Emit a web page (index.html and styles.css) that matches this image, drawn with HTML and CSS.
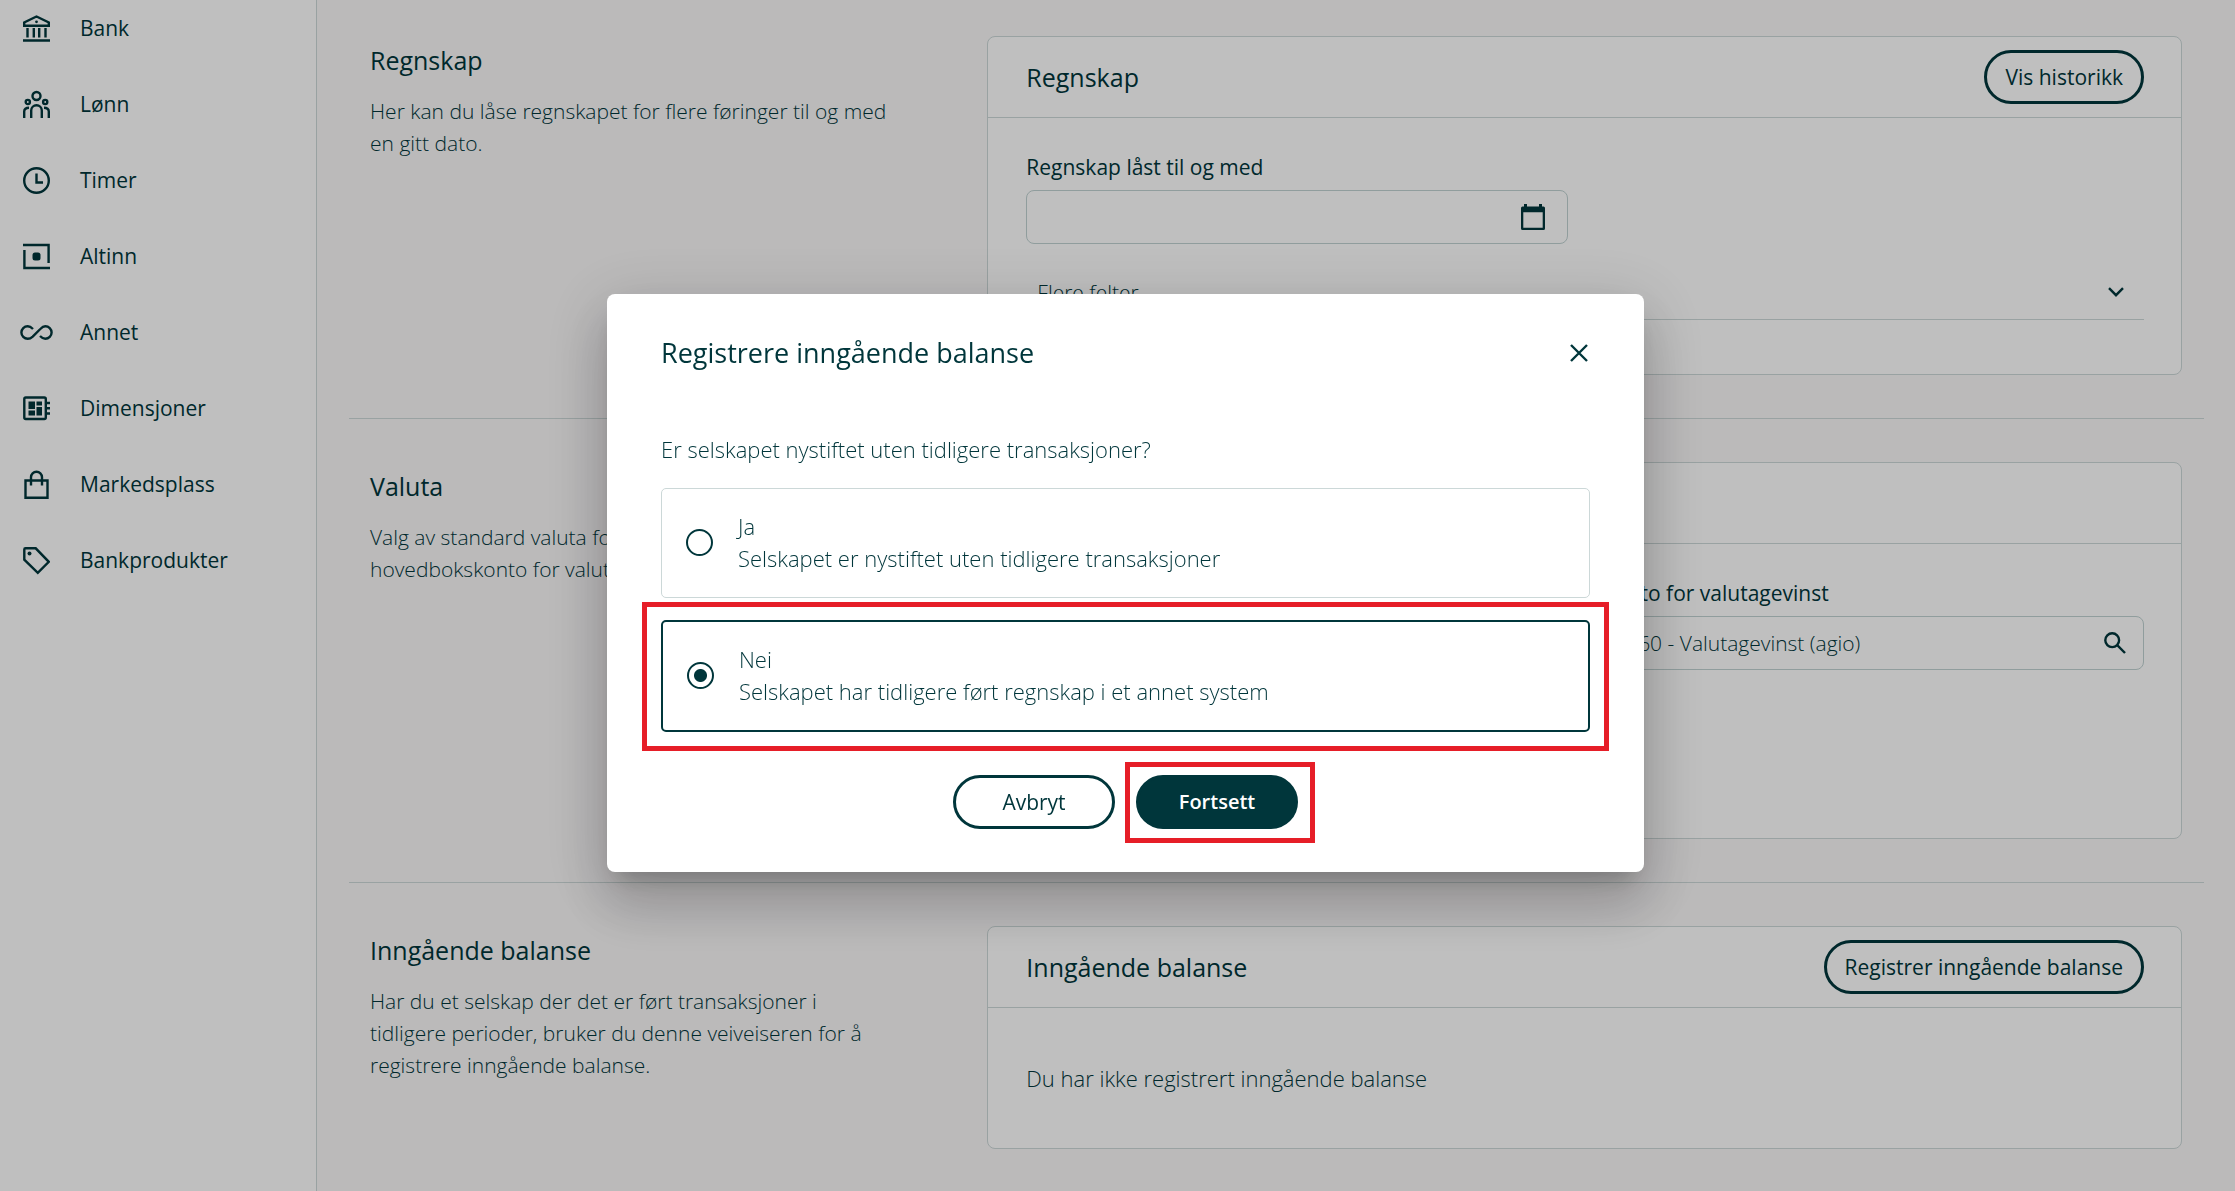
FILE: index.html
```
<!DOCTYPE html>
<html lang="no">
<head>
<meta charset="utf-8">
<title>Innstillinger</title>
<link rel="stylesheet" href="styles.css">
</head>
<body>
<div class="app">
	<nav class="sidebar">
		<a href="#"><svg class="icon" viewBox="0 0 27 27"><path d="M1.2 10.8V7.4L13.5 1.5l12.3 5.9v3.4z"/><circle class="fill" cx="13.5" cy="6.8" r="1.4"/><path d="M4.5 13v9.5M10.8 13v9.5M16.2 13v9.5M22.5 13v9.5M0 25.5h27"/></svg>Bank</a>
		<a href="#"><svg class="icon" viewBox="0 0 27 27"><circle cx="13.5" cy="5" r="4"/><circle cx="4.8" cy="11" r="2.1"/><circle cx="22.2" cy="11" r="2.1"/><path d="M8.2 27v-7.500a5.300 5.300 0 0 1 10.600 0V27M1.200 27v-6.500q0-3.700 4.800-3.700M25.800 27v-6.500q0-3.700-4.800-3.700"/></svg>Lønn</a>
		<a href="#"><svg class="icon" viewBox="0 0 27 27"><circle cx="13.500" cy="13.500" r="12.300"/><path d="M13.500 6.500v9h6.500"/></svg>Timer</a>
		<a href="#"><svg class="icon" viewBox="0 0 27 27"><path d="M0 2h25.600v18M1.400 7v18H27"/><rect class="fill" x="9.500" y="9.500" width="8" height="8" rx="2.500"/></svg>Altinn</a>
		<a href="#"><svg class="icon wide" viewBox="0 0 33 27"><path d="M13 10C11 8 9.500 7.200 7.700 7.200a6.300 6.300 0 0 0 0 12.600c2 0 3.500-.8 5-2.200L20.300 10C22 8.200 23.500 7.200 25.300 7.200a6.300 6.300 0 0 1 0 12.600c-2 0-3.500-.9-5.300-2.800"/></svg>Annet</a>
		<a href="#"><svg class="icon" viewBox="0 0 27 27"><rect x="1.300" y="2.500" width="21.500" height="21.500" rx="1.500"/><path class="fill" d="M5.500 6.500h6.500v7.500H5.500zM13.500 6.500H19v4h-5.500zM13.500 12H19v8.500h-5.500zM5.500 15.500h6.500v5H5.500z"/><path d="M23 8h4M23 13.300h4M23 18.500h4"/></svg>Dimensjoner</a>
		<a href="#"><svg class="icon" viewBox="0 0 27 29"><path d="M2.500 10.500h22v17.300h-22zM8 15.500V7.200a5.500 5.500 0 0 1 11 0v8.300"/></svg>Markedsplass</a>
		<a href="#"><svg class="icon" viewBox="0 0 27 27"><path d="M1.300 2.500v10.200L14.800 25.800 25.800 14.800 12.700 1.300H2.500Q1.300 1.300 1.300 2.500z"/><circle class="fill" cx="6.500" cy="6.500" r="2"/></svg>Bankprodukter</a>
	</nav>

	<main class="content">
		<section class="setting">
			<div class="intro">
				<h2>Regnskap</h2>
				<p>Her kan du låse regnskapet for flere føringer til og med en gitt dato.</p>
			</div>
			<div class="card">
				<div class="card-head"><h3>Regnskap</h3><button type="button" class="btn">Vis historikk</button></div>
				<div class="card-body">
					<div class="fields">
						<div class="field">
							<label for="locked">Regnskap låst til og med</label>
							<div class="input">
								<input id="locked" type="text">
								<svg class="calendar" viewBox="0 0 24 26"><path class="fill" d="M3 0h3v2.500h12V0h3v2.500h1.500Q24 2.500 24 4v20.500q0 1.500-1.500 1.500h-21Q0 26 0 24.500V4q0-1.500 1.500-1.500H3zM2.300 8.300v15.400h19.400V8.300z"/></svg>
							</div>
						</div>
					</div>
					<button type="button" class="expander">Flere felter<svg class="chevron" viewBox="0 0 16 10"><path d="M1 1.200l7 7 7-7"/></svg></button>
				</div>
			</div>
		</section>

		<section class="setting">
			<div class="intro">
				<h2>Valuta</h2>
				<p>Valg av standard valuta for selskapet, samt hovedbokskonto for valutagevinst.</p>
			</div>
			<div class="card">
				<div class="card-head"><h3>Valuta</h3></div>
				<div class="card-body">
					<div class="fields">
						<div class="field">
							<label for="currency">Valuta</label>
							<div class="input"><input id="currency" type="text" value="NOK"></div>
						</div>
						<div class="field">
							<label for="gain">Konto for valutagevinst</label>
							<div class="input">
								<input id="gain" type="text" value="8060 - Valutagevinst (agio)">
								<svg class="search" viewBox="0 0 22 22"><circle cx="8.200" cy="8.200" r="6.900"/><path d="M13.200 13.200l7.800 7.800"/></svg>
							</div>
						</div>
						<div class="field">
							<label for="loss">Konto for valutatap</label>
							<div class="input"><input id="loss" type="text"></div>
						</div>
					</div>
				</div>
			</div>
		</section>

		<section class="setting">
			<div class="intro">
				<h2>Inngående balanse</h2>
				<p>Har du et selskap der det er ført transaksjoner i tidligere perioder, bruker du denne veiveiseren for å registrere inngående balanse.</p>
			</div>
			<div class="card">
				<div class="card-head"><h3>Inngående balanse</h3><button type="button" class="btn">Registrer inngående balanse</button></div>
				<div class="card-body">
					<p class="empty">Du har ikke registrert inngående balanse</p>
				</div>
			</div>
		</section>
	</main>
</div>

<div class="backdrop">
	<form class="modal" role="dialog" aria-labelledby="modal-title">
		<div class="modal-head">
			<h1 id="modal-title">Registrere inngående balanse</h1>
			<button type="button" class="close" aria-label="Lukk"><svg viewBox="0 0 18 18"><path d="M1 1l16 16M17 1L1 17"/></svg></button>
		</div>
		<fieldset>
			<legend>Er selskapet nystiftet uten tidligere transaksjoner?</legend>
			<label class="option">
				<input type="radio" name="new-company">
				<span>Ja<br>Selskapet er nystiftet uten tidligere transaksjoner</span>
			</label>
			<label class="option marked">
				<input type="radio" name="new-company" checked>
				<span>Nei<br>Selskapet har tidligere ført regnskap i et annet system</span>
			</label>
		</fieldset>
		<div class="actions">
			<button type="button" class="btn">Avbryt</button>
			<div class="marked"><button type="button" class="btn primary">Fortsett</button></div>
		</div>
	</form>
</div>
</body>
</html>
```

FILE: styles.css
```
*{box-sizing:border-box;margin:0;padding:0;}
body{background:#faf8f9;color:#00363b;font:300 22px/32px 'Open Sans','Noto Sans',sans-serif;}
button,input{font:inherit;color:inherit;background:none;border:0;}
h1,h2,h3{font-weight:400;font-size:25px;line-height:34px;}
svg{flex:none;fill:none;stroke:#00363b;stroke-width:2.400;}
.fill{fill:#00363b;stroke:none;}

.app{display:flex;height:100vh;overflow:hidden;}

/* sidebar */
.sidebar{flex:none;width:317px;background:#fff;border-right:1px solid #ccd8d8;}
.sidebar a{display:flex;align-items:center;gap:30px;height:76px;padding-left:23px;color:inherit;text-decoration:none;font-size:21px;font-weight:400;}
.sidebar a:first-child{margin-top:-10px;}
.icon{width:27px;height:29px;}
.icon.wide{width:33px;margin:0 -3px;}

/* settings */
.content{flex:1;padding:0 31px 0 32px;}
.setting{display:grid;grid-template-columns:minmax(0,1fr) minmax(0,2fr);gap:20px;padding:43px 22px 43px 21px;border-bottom:1px solid #ccd8d8;}
.setting:first-child{padding-top:36px;}
.setting:last-child{border-bottom:0;}
.intro{padding:7px 74px 0 0;}
.intro p{margin-top:18px;font-size:21px;}
.card{background:#fff;border:1px solid #ccd8d8;border-radius:8px;}
.card-head{display:flex;align-items:center;justify-content:space-between;min-height:81px;padding:0 37px 0 38px;border-bottom:1px solid #ccd8d8;}
.card-body{padding:35px 37px 54px 38px;}
.empty{padding-top:19px;}

.btn{height:54px;padding:0 18px;border:3px solid #00363b;border-radius:27px;font-size:21px;font-weight:400;}
.btn.primary{background:#00363b;color:#fff;font-size:20px;font-weight:600;}

.fields{display:grid;grid-template-columns:1fr 1fr;gap:23px 34px;}
.field{display:grid;gap:9px;}
.field label{font-size:21px;font-weight:400;line-height:28px;}
.input{display:flex;align-items:center;height:54px;padding-right:17px;border:1px solid #c0d2d2;border-radius:8px;}
.input input{flex:1;min-width:0;height:52px;padding-left:11px;font-size:21px;}
.calendar{width:24px;height:26px;margin-right:5px;}
.search{width:22px;height:22px;}
.expander{display:flex;align-items:center;justify-content:space-between;width:100%;height:55px;margin-top:21px;padding:0 20px 0 11px;border-bottom:1px solid #ccd8d8;font-size:21px;}
.chevron{width:16px;height:10px;}

/* modal */
.backdrop{position:fixed;inset:0;display:flex;align-items:center;justify-content:center;padding:0 0 26px 16px;background:rgba(0,0,0,.25);}
.modal{width:1037px;padding:40px 54px 43px;background:#fff;border-radius:8px;box-shadow:0 15px 21px -10px rgba(0,0,0,.2),0 34px 53px 4px rgba(0,0,0,.14),0 13px 64px 11px rgba(0,0,0,.12);}
.modal-head{display:flex;align-items:center;justify-content:space-between;margin-bottom:61px;}
.modal h1{font-size:27px;line-height:38px;}
.close{width:22px;height:22px;}
.close svg{display:block;width:18px;height:18px;margin:auto;}
fieldset{border:0;}
legend{margin-bottom:23px;}
.option{position:relative;display:flex;align-items:center;gap:25px;height:110px;padding:0 24px;border:1px solid #ccd8d8;border-radius:5px;}
.option + .option{height:112px;margin-top:22px;border:2px solid #00363b;}
.option span{padding-bottom:2px;}
.option input{appearance:none;width:27px;height:27px;border:2px solid #00363b;border-radius:50%;}
.option input:checked{background:radial-gradient(circle,#00363b 6px,transparent 7px);}
.actions{display:flex;justify-content:center;gap:21px;margin-top:43px;}
.actions .btn{width:162px;}

/* red markers */
.marked{position:relative;}
.marked::after{content:'';position:absolute;inset:-13px -17px -14px -11px;border:5px solid #e61e28;pointer-events:none;}
.option.marked::after{inset:-20px -21px -21px;}
```
